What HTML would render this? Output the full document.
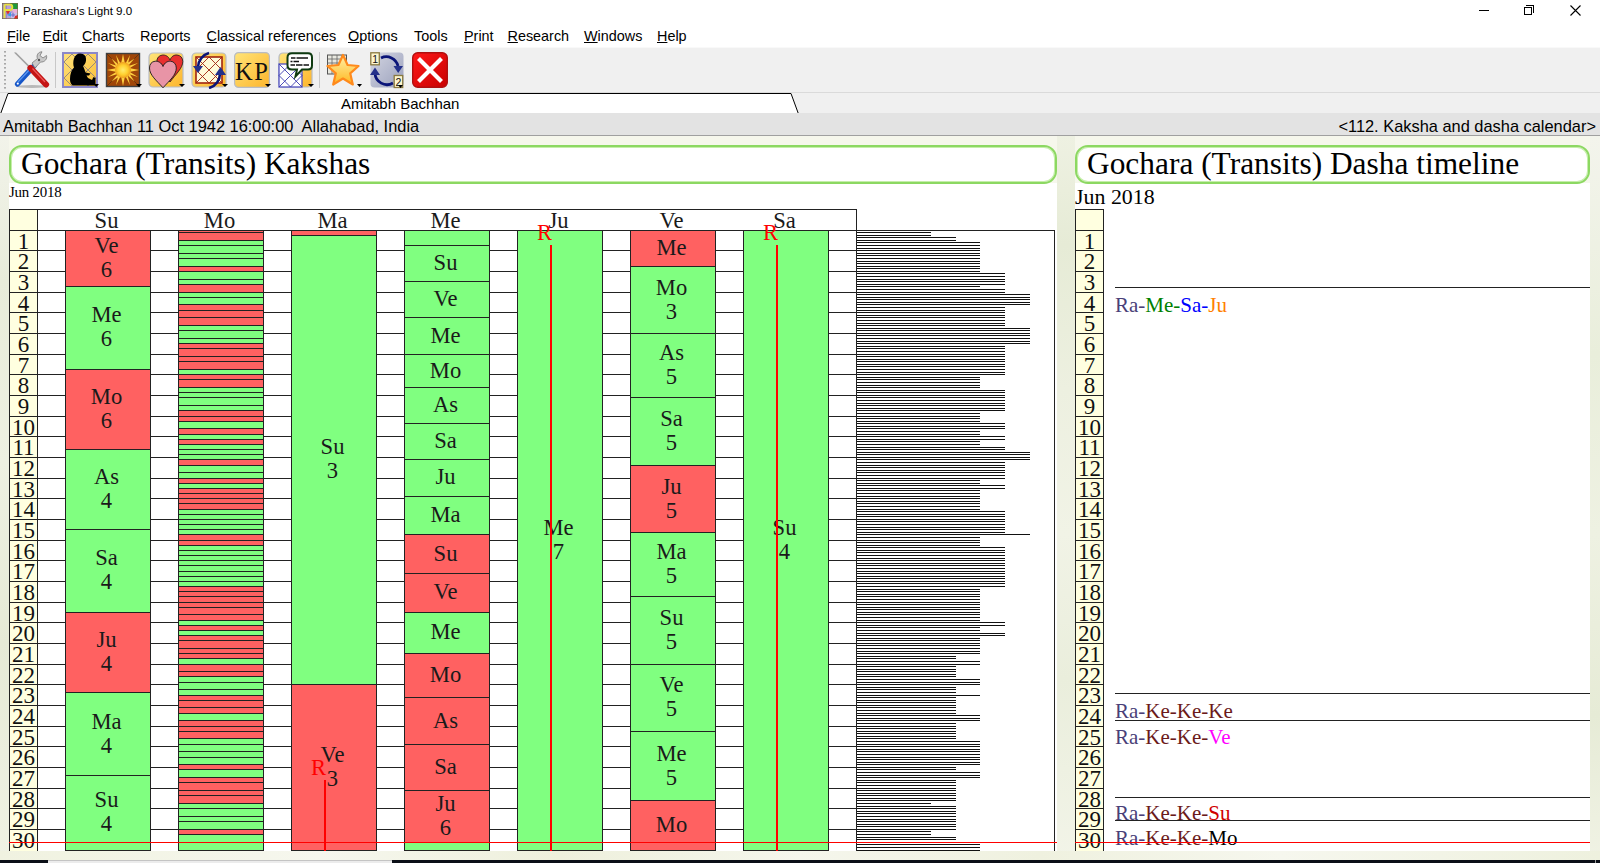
<!DOCTYPE html><html><head><meta charset="utf-8"><title>Parashara's Light 9.0</title><style>
*{margin:0;padding:0;box-sizing:border-box}
html,body{width:1600px;height:863px;overflow:hidden;background:#fff}
body{position:relative;font-family:"Liberation Sans",sans-serif;color:#000}
.a{position:absolute}
.ser{font-family:"Liberation Serif",serif}
.titlebar{left:0;top:0;width:1600px;height:24px;background:#fff}
.menubar{left:0;top:24px;width:1600px;height:23px;background:#fff}
.menubar span{position:absolute;top:4px;font-size:14.4px;line-height:17px;white-space:nowrap}
.menubar u{text-decoration:underline;text-underline-offset:0.6px;text-decoration-thickness:1px}
.toolbar{left:0;top:47px;width:1600px;height:46px;background:#f0f0f0;border-top:1px solid #e6e6e6}
.tabstrip{left:0;top:93px;width:1600px;height:21px;background:#f0f0f0;border-top:1px solid #a0a0a0}
.info{left:0;top:113px;width:1600px;height:23px;background:#e3e3e3;border-bottom:1px solid #a0a0a0}
.bg{left:0;top:136px;width:1600px;height:724px;background:radial-gradient(ellipse 14px 90px at 1066px 130px,#e2e7d4,rgba(226,231,212,0) 100%),radial-gradient(ellipse 12px 60px at 1063px 560px,#e8ecdc,rgba(232,236,220,0) 100%),radial-gradient(ellipse 8px 120px at 4px 400px,#e6ebd8,rgba(230,235,216,0) 100%),radial-gradient(ellipse 8px 150px at 1596px 560px,#e8edd8,rgba(232,237,216,0) 100%),#f6f7ec}
.panel{background:#fff}
.tbox{background:#fff;border:2px solid #8cd862;border-radius:13px;box-shadow:inset 0 0 0 1px #c6eeaa}
.hl{position:absolute;height:1px;background:#222}
.vl{position:absolute;width:1px;background:#222}
.bar{position:absolute;border:1px solid #222}
.lbl{position:absolute;font-family:"Liberation Serif",serif;font-size:22.6px;line-height:24px;text-align:center;color:#1a1a1a}
.num{position:absolute;font-family:"Liberation Serif",serif;font-size:23px;line-height:21px;text-align:center;color:#111}
.hist{position:absolute;height:1px;background:#111;left:857px}
.taskbar{left:0;top:860px;width:1600px;height:3px;background:#0b0f17}
</style></head><body>
<div class="a titlebar"></div>
<svg class="a" style="left:2px;top:3px" width="16" height="16" viewBox="0 0 16 16"><rect width="16" height="16" fill="#b8a0d8"/><rect x="0" y="0" width="5" height="16" fill="#9a88c8"/><path d="M8 0 L16 0 L16 6 L10 6 Z" fill="#1e9a3a"/><path d="M9 6 L16 6 L16 10 L12 10 Z" fill="#e8b0d8"/><path d="M4 8 L9 6 L6 12 Z" fill="#d83030"/><path d="M5 12 L9 9 L10 14 Z" fill="#38a0e8"/><path d="M9 10 L16 10 L16 16 L9 16 Z" fill="#c8c0e8"/><path d="M13 13 L16 12 L16 16 L12 16 Z" fill="#e02828"/><circle cx="11" cy="12" r="1.2" fill="none" stroke="#5050c0" stroke-width="0.8"/><path d="M2.5 1.5 L2.5 15 M2.5 1.5 L8 1.5 C11 1.5 11 7 8 7 L2.5 7" stroke="#e8e040" stroke-width="2" fill="none"/><rect x="0.3" y="0.3" width="15.4" height="15.4" fill="none" stroke="#7a6a40" stroke-width="0.6"/></svg>
<div class="a" style="left:23px;top:3px;font-size:11.6px;line-height:15px;color:#000">Parashara's Light 9.0</div>
<div class="a" style="left:1479px;top:10px;width:10px;height:1px;background:#000"></div>
<div class="a" style="left:1524px;top:7px;width:8px;height:8px;border:1px solid #000;background:#fff"></div>
<div class="a" style="left:1526px;top:5px;width:8px;height:8px;border-top:1px solid #000;border-right:1px solid #000"></div>
<div class="a" style="left:1524px;top:7px;width:8px;height:8px;border:1px solid #000;background:#fff"></div>
<svg class="a" style="left:1569.5px;top:4.5px" width="11" height="11"><path d="M0.5 0.5 L10.5 10.5 M10.5 0.5 L0.5 10.5" stroke="#000" stroke-width="1.1"/></svg>
<div class="a menubar">
<span style="left:7px"><u>F</u>ile</span>
<span style="left:42.5px"><u>E</u>dit</span>
<span style="left:82px"><u>C</u>harts</span>
<span style="left:140px">Reports</span>
<span style="left:206.5px"><u>C</u>lassical references</span>
<span style="left:348px"><u>O</u>ptions</span>
<span style="left:414px">Tools</span>
<span style="left:464px"><u>P</u>rint</span>
<span style="left:507.5px"><u>R</u>esearch</span>
<span style="left:584px"><u>W</u>indows</span>
<span style="left:657px"><u>H</u>elp</span>
</div>
<div class="a toolbar"></div>
<div class="a" style="left:0;top:47px;width:1600px;height:1px;background:#f9f9f9"></div>
<div class="a" style="left:0;top:92px;width:1600px;height:1px;background:#dadada"></div>
<svg class="a" style="left:3px;top:50px" width="4" height="40"><g fill="#a8a8a8"><rect x="1" y="1" width="2" height="1.6"/><rect x="1" y="5" width="2" height="1.6"/><rect x="1" y="9" width="2" height="1.6"/><rect x="1" y="13" width="2" height="1.6"/><rect x="1" y="17" width="2" height="1.6"/><rect x="1" y="21" width="2" height="1.6"/><rect x="1" y="25" width="2" height="1.6"/><rect x="1" y="29" width="2" height="1.6"/><rect x="1" y="33" width="2" height="1.6"/><rect x="1" y="37" width="2" height="1.6"/></g></svg>
<!-- tools -->
<svg class="a" style="left:13px;top:51px" width="37" height="38" viewBox="0 0 37 38">
 <ellipse cx="19" cy="35.5" rx="16" ry="1.5" fill="#8a8a8a" opacity="0.55"/>
 <line x1="2" y1="1.5" x2="17" y2="16.5" stroke="#d8d8d8" stroke-width="2.4"/>
 <line x1="2" y1="1.5" x2="17" y2="16.5" stroke="#6a6a6a" stroke-width="0.9"/>
 <line x1="4.5" y1="33" x2="21" y2="15" stroke="#1656c8" stroke-width="5.2" stroke-linecap="round"/>
 <line x1="5" y1="31" x2="19" y2="16" stroke="#5a96ee" stroke-width="1.3"/>
 <circle cx="4.8" cy="32.6" r="1.1" fill="#fff"/>
 <path d="M19 12 L24.5 7.5 C23 4 25.5 0.8 29 0.8 L27 4.5 L30 7 L33.5 4.5 C34.5 8 31.5 11.5 27.5 11 L22 17 Z" fill="#c9c9c9" stroke="#7a7a7a" stroke-width="0.8"/>
 <circle cx="26" cy="9" r="1.2" fill="#555"/>
 <line x1="17.5" y1="17" x2="33" y2="33.5" stroke="#c41414" stroke-width="6.2" stroke-linecap="round"/>
 <line x1="19.5" y1="17.5" x2="32" y2="31" stroke="#ee5a5a" stroke-width="1.2"/>
</svg>
<div class="a" style="left:55px;top:52px;width:1px;height:36px;background:#c8c8c8"></div>
<!-- baby -->
<svg class="a" style="left:62px;top:52px" width="38" height="37" viewBox="0 0 38 37">
 <defs><linearGradient id="yg" x1="0" y1="0" x2="1" y2="1"><stop offset="0" stop-color="#ffe27a"/><stop offset="1" stop-color="#fbbf3a"/></linearGradient></defs>
 <rect x="1" y="1" width="34" height="34" fill="url(#yg)" stroke="#8c88c8" stroke-width="2"/>
 <g stroke="#9a8a7a" stroke-width="1" fill="none"><path d="M2 10 L10 2 M2 26 L26 2 M10 34 L34 10 M26 34 L34 26 M2 10 L26 34 M2 26 L10 34 M10 2 L34 26 M26 2 L34 10"/></g>
 <path d="M18 1.5 C22.5 1.5 24.5 4.5 24 8.5 C23.8 11 22.5 13 21 14 C22 16 23 18.5 23.5 20.5 L28.5 21.5 L27 23.5 L24.5 23.5 L26 26 L30 28 L31.5 25 L33.5 26 L33.5 33.5 L12 33.5 C9.5 33.5 8 31 8 27 C8 22 9.5 18 12 15.5 C11 13.5 11 9 12 6.5 C13 3.5 15 1.5 18 1.5 Z" fill="#000"/>
 <path d="M31.5 32 L37 32 L34.2 35 Z" fill="#000"/>
</svg>
<!-- sun -->
<svg class="a" style="left:105px;top:52px" width="38" height="37" viewBox="0 0 38 37">
 <defs><radialGradient id="sg"><stop offset="0" stop-color="#ffec70"/><stop offset="0.6" stop-color="#ffd030"/><stop offset="1" stop-color="#f0a020"/></radialGradient></defs>
 <rect x="1.5" y="1.5" width="33" height="33" fill="#a04608" stroke="#404040" stroke-width="1.4"/>
 <path d="M2 2 L34 34 M34 2 L2 34" stroke="#5a3010" stroke-width="0.8"/>
 <g fill="#ffd040"><path d="M18 2 L20 12 L16 12 Z M18 34 L20 24 L16 24 Z M2 18 L12 16 L12 20 Z M34 18 L24 16 L24 20 Z M6.5 6.5 L14 13 L12 15 Z M29.5 29.5 L22 23 L24 21 Z M29.5 6.5 L23 14 L21 12 Z M6.5 29.5 L13 22 L15 24 Z M11 3 L16 12.5 L13.5 13.5 Z M25 3 L22.5 13.5 L20 12.5 Z M25 33 L20 23.5 L22.5 22.5 Z M11 33 L13.5 22.5 L16 23.5 Z M3 11 L12.5 14 L12 16.5 Z M33 11 L24 16.5 L23.5 14 Z M33 25 L23.5 22 L24 19.5 Z M3 25 L12 19.5 L12.5 22 Z"/></g>
 <circle cx="18" cy="18" r="8" fill="url(#sg)"/>
 <path d="M31 32 L37 32 L34 35 Z" fill="#000"/>
</svg>
<!-- hearts -->
<svg class="a" style="left:148px;top:52px" width="38" height="37" viewBox="0 0 38 37">
 <defs><linearGradient id="yg2" x1="0" y1="0" x2="1" y2="1"><stop offset="0" stop-color="#ffe478"/><stop offset="1" stop-color="#fdb52c"/></linearGradient></defs>
 <rect x="1" y="1" width="34" height="34" rx="4" fill="url(#yg2)" stroke="#b8bcc4" stroke-width="1.2"/>
 <path d="M22 8 C20.5 4 17 2.8 14.5 3 C11 3.3 8.8 6 8.8 9.5 C8.8 16 16 22 22 30 C28 22 34.8 16 34.8 9.5 C34.8 6 32.5 3.3 29 3 C26.5 2.8 23.5 4 22 8 Z" fill="#e8302f" stroke="#1a1a1a" stroke-width="0.8"/>
 <path d="M15 14.5 C13.5 10.5 10 9 7.2 9.2 C3.6 9.5 1.5 12.3 1.5 16 C1.5 23 8.5 28.5 15 35.8 C21.5 28.5 28.3 23 28.3 16 C28.3 12.3 26 9.5 22.6 9.2 C19.8 9 16.5 10.5 15 14.5 Z" fill="#e894a6" stroke="#1a1a1a" stroke-width="0.9"/>
 <path d="M31 32 L37 32 L34 35 Z" fill="#000"/>
</svg>
<!-- rotate chart -->
<svg class="a" style="left:191px;top:51px" width="38" height="38" viewBox="0 0 38 38">
 <rect x="1" y="2" width="34" height="34" rx="4" fill="url(#yg2)" stroke="#b8bcc4" stroke-width="1.2"/>
 <rect x="5" y="6" width="26" height="26" fill="#fffbd8" stroke="#a02410" stroke-width="1.6"/>
 <g stroke="#a02410" stroke-width="0.9" fill="none"><path d="M5 19 L18 6 L31 19 L18 32 Z M5 6 L31 32 M31 6 L5 32"/></g>
 <path d="M18 2 A15 15 0 0 0 7 16" stroke="#0a1478" stroke-width="2.6" fill="none"/>
 <path d="M2 15 L12 15 L7 22 Z" fill="#23308a"/>
 <path d="M18 37 A15 15 0 0 0 29 22" stroke="#0a1478" stroke-width="2.6" fill="none"/>
 <path d="M24 24 L35 24 L29.5 16 Z" fill="#23308a"/>
 <path d="M31 33 L37 33 L34 36 Z" fill="#000"/>
</svg>
<!-- KP -->
<svg class="a" style="left:234px;top:52px" width="38" height="37" viewBox="0 0 38 37">
 <rect x="0.6" y="0.6" width="34.8" height="34.8" rx="4" fill="url(#yg2)" stroke="#b8bcc4" stroke-width="1.2"/>
 <text x="1" y="27.5" font-family="Liberation Serif" font-size="24.5" fill="#111" letter-spacing="1.6">KP</text>
 <path d="M31 32 L37 32 L34 35 Z" fill="#000"/>
</svg>
<!-- chat chart -->
<svg class="a" style="left:278px;top:52px" width="38" height="37" viewBox="0 0 38 37">
 <rect x="1" y="1" width="33" height="34" rx="4" fill="url(#yg2)" stroke="#b8bcc4" stroke-width="1.2"/>
 <rect x="1" y="12" width="23" height="23" fill="#fff" stroke="#5050c0" stroke-width="1.3"/>
 <g stroke="#3a3ab0" stroke-width="0.9" fill="none"><path d="M1 12 L24 35 M24 12 L1 35 M1 23.5 L12.5 12 L24 23.5 L12.5 35 Z"/></g>
 <path d="M9.5 5.5 C9.5 2.5 11.5 1.2 14 1.2 L30 1.2 C32.5 1.2 34 2.5 34 5.5 L34 13.5 C34 16 32.5 17.5 30 17.5 L24 17.5 L17.5 24.5 L19 17.5 L14 17.5 C11.5 17.5 9.5 16 9.5 13.5 Z" fill="#fff" stroke="#0e3a10" stroke-width="2"/>
 <g stroke="#111" stroke-width="1.6"><path d="M13 6 L17.5 6 M18.5 6 L30 6 M12.5 9.5 L14.5 9.5 M15.5 9.5 L21 9.5 M12.5 13 L17 13 M18 13 L24.5 13 M25.5 13 L31 13"/></g>
 <path d="M30 32 L36 32 L33 35 Z" fill="#000"/>
</svg>
<div class="a" style="left:319px;top:52px;width:1px;height:36px;background:#c8c8c8"></div>
<!-- star -->
<svg class="a" style="left:326px;top:53px" width="38" height="36" viewBox="0 0 38 36">
 <defs><linearGradient id="stg" x1="0" y1="0" x2="0" y2="1"><stop offset="0" stop-color="#fff0a8"/><stop offset="1" stop-color="#ffb820"/></linearGradient></defs>
 <rect x="1.5" y="2" width="19" height="19" fill="#e8e8e0" stroke="#555" stroke-width="1"/>
 <g stroke="#666" stroke-width="0.8"><path d="M1.5 6 L20.5 6 M1.5 10 L20.5 10 M1.5 14 L20.5 14 M6 2 L6 21 M11 2 L11 21 M16 2 L16 21"/></g>
 <path d="M17 2 L21.6 12 L32.5 13 L24.2 20.3 L26.8 31.5 L17 25.5 L7.2 31.5 L9.8 20.3 L1.5 13 L12.4 12 Z" fill="url(#stg)" stroke="#ff8a1c" stroke-width="2.2" stroke-linejoin="round"/>
 <path d="M31 31 L36 31 L33.5 34 Z" fill="#000"/>
</svg>
<!-- sync -->
<svg class="a" style="left:370px;top:52px" width="38" height="37" viewBox="0 0 38 37">
 <defs><linearGradient id="syg" x1="0" y1="0" x2="1" y2="1"><stop offset="0" stop-color="#d4d6e2"/><stop offset="1" stop-color="#9aa0bc"/></linearGradient></defs>
 <rect x="0.5" y="0.5" width="33" height="35" rx="4" fill="url(#syg)"/>
 <path d="M11 6 A12 12 0 0 1 28 14" stroke="#0a1478" stroke-width="2.8" fill="none"/>
 <path d="M23.5 14 L33 14 L28.2 21 Z" fill="#23308a"/>
 <path d="M23 31 A12 12 0 0 1 5 21" stroke="#0a1478" stroke-width="2.8" fill="none"/>
 <path d="M0 23 L10 23 L5 15.5 Z" fill="#23308a"/>
 <rect x="0.8" y="0.8" width="8.5" height="12" fill="#fdf6d0" stroke="#8a7a40" stroke-width="1.3"/>
 <text x="2.3" y="11" font-family="Liberation Sans" font-size="10.5" fill="#111">1</text>
 <rect x="24.2" y="23.5" width="8.5" height="12" fill="#fdf6d0" stroke="#8a7a40" stroke-width="1.3"/>
 <text x="25.5" y="34" font-family="Liberation Sans" font-size="10.5" fill="#111">2</text>
 <path d="M28 33 L33 33 L30.5 36 Z" fill="#000"/>
</svg>
<!-- close -->
<svg class="a" style="left:412px;top:52px" width="36" height="36" viewBox="0 0 36 36">
 <defs><linearGradient id="rg" x1="0" y1="0" x2="1" y2="1"><stop offset="0" stop-color="#ff1a1a"/><stop offset="1" stop-color="#c80000"/></linearGradient></defs>
 <rect x="0.7" y="0.7" width="34.6" height="34.6" rx="5" fill="url(#rg)" stroke="#b01010" stroke-width="1.4"/>
 <path d="M6.5 6.5 L29.5 29.5 M29.5 6.5 L6.5 29.5" stroke="#fff" stroke-width="4.2"/>
</svg>

<div class="a" style="left:0;top:93px;width:1600px;height:21px;background:#f0f0f0"></div>
<svg class="a" style="left:0;top:92px" width="800" height="23"><path d="M0.5 22 L8 1.5 L791 1.5 L798.5 22" fill="#fff" stroke="#000" stroke-width="1"/></svg>
<div class="a" style="left:341px;top:95.5px;font-size:15px;line-height:16px">Amitabh Bachhan</div>
<div class="a info"></div>
<div class="a" style="left:3px;top:117px;font-size:16.4px;line-height:19px;white-space:pre">Amitabh Bachhan 11 Oct 1942 16:00:00  Allahabad, India</div>
<div class="a" style="right:4px;top:117px;font-size:16.4px;line-height:19px;white-space:pre">&lt;112. Kaksha and dasha calendar&gt;</div>
<div class="a bg"></div>
<div class="a" style="left:1057px;top:136px;width:18px;height:724px;background:linear-gradient(to bottom,#eef1e2 0%,#e6ebd6 15%,#edf0e0 35%,#f1f3e6 55%,#eaeedc 75%,#f2f4e8 100%)"></div>
<div class="a" style="left:0;top:136px;width:9px;height:724px;background:linear-gradient(to bottom,#f2f3ea 0%,#e8ecda 20%,#eef1e2 45%,#e6ead6 70%,#f0f2e4 100%)"></div>
<div class="a" style="left:1590px;top:136px;width:10px;height:724px;background:linear-gradient(to bottom,#f3f4ec 0%,#e9eedb 30%,#eef1e2 55%,#e6ebd6 80%,#f0f2e4 100%)"></div>
<div class="a" style="left:0;top:851px;width:1600px;height:9px;background:linear-gradient(to right,#f0f2e0 0%,#f6f7ee 20%,#eef0dc 35%,#f5f6ec 50%,#eff1df 65%,#f6f7ee 80%,#eef1de 100%)"></div>
<div class="a panel" style="left:9px;top:183px;width:1048px;height:668px"></div>
<div class="a tbox" style="left:9px;top:145px;width:1048px;height:39px"></div>
<div class="a ser" style="left:21px;top:147px;font-size:31.4px;line-height:34px">Gochara (Transits) Kakshas</div>
<div class="a ser" style="left:9px;top:184.4px;font-size:14.9px;line-height:16px;letter-spacing:-0.2px">Jun 2018</div>
<div class="a" style="left:9px;top:209px;width:29px;height:642px;background:#ffffe0"></div>
<div class="hl" style="left:9px;top:209px;width:848px"></div>
<div class="vl" style="left:9px;top:209px;height:642px"></div>
<div class="vl" style="left:37px;top:209px;height:642px"></div>
<div class="vl" style="left:856px;top:209px;height:22px"></div>
<div class="hl" style="left:9px;top:230px;width:848px"></div>
<div class="hl" style="left:9px;top:250px;width:848px"></div>
<div class="hl" style="left:9px;top:271px;width:848px"></div>
<div class="hl" style="left:9px;top:292px;width:848px"></div>
<div class="hl" style="left:9px;top:312px;width:848px"></div>
<div class="hl" style="left:9px;top:333px;width:848px"></div>
<div class="hl" style="left:9px;top:354px;width:848px"></div>
<div class="hl" style="left:9px;top:374px;width:848px"></div>
<div class="hl" style="left:9px;top:395px;width:848px"></div>
<div class="hl" style="left:9px;top:416px;width:848px"></div>
<div class="hl" style="left:9px;top:436px;width:848px"></div>
<div class="hl" style="left:9px;top:457px;width:848px"></div>
<div class="hl" style="left:9px;top:478px;width:848px"></div>
<div class="hl" style="left:9px;top:498px;width:848px"></div>
<div class="hl" style="left:9px;top:519px;width:848px"></div>
<div class="hl" style="left:9px;top:540px;width:848px"></div>
<div class="hl" style="left:9px;top:560px;width:848px"></div>
<div class="hl" style="left:9px;top:581px;width:848px"></div>
<div class="hl" style="left:9px;top:602px;width:848px"></div>
<div class="hl" style="left:9px;top:622px;width:848px"></div>
<div class="hl" style="left:9px;top:643px;width:848px"></div>
<div class="hl" style="left:9px;top:664px;width:848px"></div>
<div class="hl" style="left:9px;top:684px;width:848px"></div>
<div class="hl" style="left:9px;top:705px;width:848px"></div>
<div class="hl" style="left:9px;top:726px;width:848px"></div>
<div class="hl" style="left:9px;top:746px;width:848px"></div>
<div class="hl" style="left:9px;top:767px;width:848px"></div>
<div class="hl" style="left:9px;top:788px;width:848px"></div>
<div class="hl" style="left:9px;top:808px;width:848px"></div>
<div class="hl" style="left:9px;top:829px;width:848px"></div>
<div class="a" style="left:856px;top:230px;width:199px;height:621px;border:1px solid #222;border-bottom:none;background:#fff"></div>
<div class="num" style="left:10px;top:231px;width:27px">1</div>
<div class="num" style="left:10px;top:251px;width:27px">2</div>
<div class="num" style="left:10px;top:272px;width:27px">3</div>
<div class="num" style="left:10px;top:293px;width:27px">4</div>
<div class="num" style="left:10px;top:313px;width:27px">5</div>
<div class="num" style="left:10px;top:334px;width:27px">6</div>
<div class="num" style="left:10px;top:355px;width:27px">7</div>
<div class="num" style="left:10px;top:375px;width:27px">8</div>
<div class="num" style="left:10px;top:396px;width:27px">9</div>
<div class="num" style="left:10px;top:417px;width:27px">10</div>
<div class="num" style="left:10px;top:437px;width:27px">11</div>
<div class="num" style="left:10px;top:458px;width:27px">12</div>
<div class="num" style="left:10px;top:479px;width:27px">13</div>
<div class="num" style="left:10px;top:499px;width:27px">14</div>
<div class="num" style="left:10px;top:520px;width:27px">15</div>
<div class="num" style="left:10px;top:541px;width:27px">16</div>
<div class="num" style="left:10px;top:561px;width:27px">17</div>
<div class="num" style="left:10px;top:582px;width:27px">18</div>
<div class="num" style="left:10px;top:603px;width:27px">19</div>
<div class="num" style="left:10px;top:623px;width:27px">20</div>
<div class="num" style="left:10px;top:644px;width:27px">21</div>
<div class="num" style="left:10px;top:665px;width:27px">22</div>
<div class="num" style="left:10px;top:685px;width:27px">23</div>
<div class="num" style="left:10px;top:706px;width:27px">24</div>
<div class="num" style="left:10px;top:727px;width:27px">25</div>
<div class="num" style="left:10px;top:747px;width:27px">26</div>
<div class="num" style="left:10px;top:768px;width:27px">27</div>
<div class="num" style="left:10px;top:789px;width:27px">28</div>
<div class="num" style="left:10px;top:809px;width:27px">29</div>
<div class="num" style="left:10px;top:830px;width:27px">30</div>
<div class="lbl" style="left:66.5px;top:208.6px;width:80px;line-height:24px">Su</div>
<div class="lbl" style="left:179.5px;top:208.6px;width:80px;line-height:24px">Mo</div>
<div class="lbl" style="left:292.5px;top:208.6px;width:80px;line-height:24px">Ma</div>
<div class="lbl" style="left:405.5px;top:208.6px;width:80px;line-height:24px">Me</div>
<div class="lbl" style="left:518.5px;top:208.6px;width:80px;line-height:24px">Ju</div>
<div class="lbl" style="left:631.5px;top:208.6px;width:80px;line-height:24px">Ve</div>
<div class="lbl" style="left:744.5px;top:208.6px;width:80px;line-height:24px">Sa</div>
<div class="bar" style="left:65px;top:230px;width:86px;height:57px;background:#ff6161"></div>
<div class="bar" style="left:65px;top:286px;width:86px;height:84px;background:#80ff80"></div>
<div class="bar" style="left:65px;top:369px;width:86px;height:81px;background:#ff6161"></div>
<div class="bar" style="left:65px;top:449px;width:86px;height:81px;background:#80ff80"></div>
<div class="bar" style="left:65px;top:529px;width:86px;height:84px;background:#80ff80"></div>
<div class="bar" style="left:65px;top:612px;width:86px;height:81px;background:#ff6161"></div>
<div class="bar" style="left:65px;top:692px;width:86px;height:84px;background:#80ff80"></div>
<div class="bar" style="left:65px;top:775px;width:86px;height:76px;background:#80ff80"></div>
<div class="lbl" style="left:63.5px;top:234.1px;width:86px">Ve<br>6</div>
<div class="lbl" style="left:63.5px;top:303.2px;width:86px">Me<br>6</div>
<div class="lbl" style="left:63.5px;top:384.8px;width:86px">Mo<br>6</div>
<div class="lbl" style="left:63.5px;top:464.8px;width:86px">As<br>4</div>
<div class="lbl" style="left:63.5px;top:546.2px;width:86px">Sa<br>4</div>
<div class="lbl" style="left:63.5px;top:627.8px;width:86px">Ju<br>4</div>
<div class="lbl" style="left:63.5px;top:709.5px;width:86px">Ma<br>4</div>
<div class="lbl" style="left:63.5px;top:788.4px;width:86px">Su<br>4</div>
<div class="bar" style="left:178px;top:230px;width:86px;height:3px;background:#ff6161"></div>
<div class="bar" style="left:178px;top:232px;width:86px;height:9px;background:#ff6161"></div>
<div class="bar" style="left:178px;top:240px;width:86px;height:6px;background:#80ff80"></div>
<div class="bar" style="left:178px;top:245px;width:86px;height:9px;background:#80ff80"></div>
<div class="bar" style="left:178px;top:253px;width:86px;height:6px;background:#80ff80"></div>
<div class="bar" style="left:178px;top:258px;width:86px;height:9px;background:#80ff80"></div>
<div class="bar" style="left:178px;top:266px;width:86px;height:6px;background:#ff6161"></div>
<div class="bar" style="left:178px;top:271px;width:86px;height:9px;background:#80ff80"></div>
<div class="bar" style="left:178px;top:279px;width:86px;height:6px;background:#80ff80"></div>
<div class="bar" style="left:178px;top:284px;width:86px;height:9px;background:#ff6161"></div>
<div class="bar" style="left:178px;top:292px;width:86px;height:6px;background:#80ff80"></div>
<div class="bar" style="left:178px;top:297px;width:86px;height:8px;background:#80ff80"></div>
<div class="bar" style="left:178px;top:304px;width:86px;height:7px;background:#ff6161"></div>
<div class="bar" style="left:178px;top:310px;width:86px;height:8px;background:#ff6161"></div>
<div class="bar" style="left:178px;top:317px;width:86px;height:9px;background:#ff6161"></div>
<div class="bar" style="left:178px;top:325px;width:86px;height:6px;background:#80ff80"></div>
<div class="bar" style="left:178px;top:330px;width:86px;height:9px;background:#80ff80"></div>
<div class="bar" style="left:178px;top:338px;width:86px;height:6px;background:#80ff80"></div>
<div class="bar" style="left:178px;top:343px;width:86px;height:6px;background:#ff6161"></div>
<div class="bar" style="left:178px;top:348px;width:86px;height:9px;background:#ff6161"></div>
<div class="bar" style="left:178px;top:356px;width:86px;height:6px;background:#ff6161"></div>
<div class="bar" style="left:178px;top:361px;width:86px;height:9px;background:#ff6161"></div>
<div class="bar" style="left:178px;top:369px;width:86px;height:6px;background:#80ff80"></div>
<div class="bar" style="left:178px;top:374px;width:86px;height:6px;background:#ff6161"></div>
<div class="bar" style="left:178px;top:379px;width:86px;height:9px;background:#ff6161"></div>
<div class="bar" style="left:178px;top:387px;width:86px;height:6px;background:#80ff80"></div>
<div class="bar" style="left:178px;top:392px;width:86px;height:6px;background:#80ff80"></div>
<div class="bar" style="left:178px;top:397px;width:86px;height:9px;background:#80ff80"></div>
<div class="bar" style="left:178px;top:405px;width:86px;height:6px;background:#80ff80"></div>
<div class="bar" style="left:178px;top:410px;width:86px;height:7px;background:#ff6161"></div>
<div class="bar" style="left:178px;top:416px;width:86px;height:6px;background:#ff6161"></div>
<div class="bar" style="left:178px;top:421px;width:86px;height:8px;background:#80ff80"></div>
<div class="bar" style="left:178px;top:428px;width:86px;height:7px;background:#ff6161"></div>
<div class="bar" style="left:178px;top:434px;width:86px;height:6px;background:#80ff80"></div>
<div class="bar" style="left:178px;top:439px;width:86px;height:6px;background:#ff6161"></div>
<div class="bar" style="left:178px;top:444px;width:86px;height:6px;background:#80ff80"></div>
<div class="bar" style="left:178px;top:449px;width:86px;height:6px;background:#80ff80"></div>
<div class="bar" style="left:178px;top:454px;width:86px;height:6px;background:#80ff80"></div>
<div class="bar" style="left:178px;top:459px;width:86px;height:7px;background:#ff6161"></div>
<div class="bar" style="left:178px;top:465px;width:86px;height:8px;background:#80ff80"></div>
<div class="bar" style="left:178px;top:472px;width:86px;height:7px;background:#80ff80"></div>
<div class="bar" style="left:178px;top:478px;width:86px;height:6px;background:#ff6161"></div>
<div class="bar" style="left:178px;top:483px;width:86px;height:6px;background:#80ff80"></div>
<div class="bar" style="left:178px;top:488px;width:86px;height:6px;background:#ff6161"></div>
<div class="bar" style="left:178px;top:493px;width:86px;height:6px;background:#ff6161"></div>
<div class="bar" style="left:178px;top:498px;width:86px;height:6px;background:#ff6161"></div>
<div class="bar" style="left:178px;top:503px;width:86px;height:7px;background:#ff6161"></div>
<div class="bar" style="left:178px;top:509px;width:86px;height:6px;background:#80ff80"></div>
<div class="bar" style="left:178px;top:514px;width:86px;height:6px;background:#80ff80"></div>
<div class="bar" style="left:178px;top:519px;width:86px;height:6px;background:#80ff80"></div>
<div class="bar" style="left:178px;top:524px;width:86px;height:6px;background:#80ff80"></div>
<div class="bar" style="left:178px;top:529px;width:86px;height:6px;background:#80ff80"></div>
<div class="bar" style="left:178px;top:534px;width:86px;height:7px;background:#ff6161"></div>
<div class="bar" style="left:178px;top:540px;width:86px;height:6px;background:#ff6161"></div>
<div class="bar" style="left:178px;top:545px;width:86px;height:6px;background:#80ff80"></div>
<div class="bar" style="left:178px;top:550px;width:86px;height:6px;background:#80ff80"></div>
<div class="bar" style="left:178px;top:555px;width:86px;height:6px;background:#80ff80"></div>
<div class="bar" style="left:178px;top:560px;width:86px;height:6px;background:#80ff80"></div>
<div class="bar" style="left:178px;top:565px;width:86px;height:7px;background:#80ff80"></div>
<div class="bar" style="left:178px;top:571px;width:86px;height:6px;background:#80ff80"></div>
<div class="bar" style="left:178px;top:576px;width:86px;height:6px;background:#80ff80"></div>
<div class="bar" style="left:178px;top:581px;width:86px;height:6px;background:#80ff80"></div>
<div class="bar" style="left:178px;top:586px;width:86px;height:6px;background:#ff6161"></div>
<div class="bar" style="left:178px;top:591px;width:86px;height:6px;background:#ff6161"></div>
<div class="bar" style="left:178px;top:596px;width:86px;height:7px;background:#ff6161"></div>
<div class="bar" style="left:178px;top:602px;width:86px;height:6px;background:#ff6161"></div>
<div class="bar" style="left:178px;top:607px;width:86px;height:8px;background:#ff6161"></div>
<div class="bar" style="left:178px;top:614px;width:86px;height:7px;background:#ff6161"></div>
<div class="bar" style="left:178px;top:620px;width:86px;height:6px;background:#80ff80"></div>
<div class="bar" style="left:178px;top:625px;width:86px;height:6px;background:#ff6161"></div>
<div class="bar" style="left:178px;top:630px;width:86px;height:6px;background:#80ff80"></div>
<div class="bar" style="left:178px;top:635px;width:86px;height:6px;background:#ff6161"></div>
<div class="bar" style="left:178px;top:640px;width:86px;height:9px;background:#ff6161"></div>
<div class="bar" style="left:178px;top:648px;width:86px;height:6px;background:#ff6161"></div>
<div class="bar" style="left:178px;top:653px;width:86px;height:6px;background:#ff6161"></div>
<div class="bar" style="left:178px;top:658px;width:86px;height:7px;background:#80ff80"></div>
<div class="bar" style="left:178px;top:664px;width:86px;height:8px;background:#ff6161"></div>
<div class="bar" style="left:178px;top:671px;width:86px;height:6px;background:#ff6161"></div>
<div class="bar" style="left:178px;top:676px;width:86px;height:7px;background:#80ff80"></div>
<div class="bar" style="left:178px;top:682px;width:86px;height:8px;background:#80ff80"></div>
<div class="bar" style="left:178px;top:689px;width:86px;height:7px;background:#80ff80"></div>
<div class="bar" style="left:178px;top:695px;width:86px;height:6px;background:#ff6161"></div>
<div class="bar" style="left:178px;top:700px;width:86px;height:8px;background:#ff6161"></div>
<div class="bar" style="left:178px;top:707px;width:86px;height:7px;background:#ff6161"></div>
<div class="bar" style="left:178px;top:713px;width:86px;height:8px;background:#80ff80"></div>
<div class="bar" style="left:178px;top:720px;width:86px;height:7px;background:#ff6161"></div>
<div class="bar" style="left:178px;top:726px;width:86px;height:6px;background:#ff6161"></div>
<div class="bar" style="left:178px;top:731px;width:86px;height:8px;background:#ff6161"></div>
<div class="bar" style="left:178px;top:738px;width:86px;height:7px;background:#80ff80"></div>
<div class="bar" style="left:178px;top:744px;width:86px;height:8px;background:#80ff80"></div>
<div class="bar" style="left:178px;top:751px;width:86px;height:7px;background:#80ff80"></div>
<div class="bar" style="left:178px;top:757px;width:86px;height:8px;background:#80ff80"></div>
<div class="bar" style="left:178px;top:764px;width:86px;height:6px;background:#ff6161"></div>
<div class="bar" style="left:178px;top:769px;width:86px;height:9px;background:#80ff80"></div>
<div class="bar" style="left:178px;top:777px;width:86px;height:6px;background:#ff6161"></div>
<div class="bar" style="left:178px;top:782px;width:86px;height:9px;background:#ff6161"></div>
<div class="bar" style="left:178px;top:790px;width:86px;height:6px;background:#ff6161"></div>
<div class="bar" style="left:178px;top:795px;width:86px;height:9px;background:#ff6161"></div>
<div class="bar" style="left:178px;top:803px;width:86px;height:6px;background:#80ff80"></div>
<div class="bar" style="left:178px;top:808px;width:86px;height:9px;background:#80ff80"></div>
<div class="bar" style="left:178px;top:816px;width:86px;height:6px;background:#80ff80"></div>
<div class="bar" style="left:178px;top:821px;width:86px;height:9px;background:#80ff80"></div>
<div class="bar" style="left:178px;top:829px;width:86px;height:6px;background:#ff6161"></div>
<div class="bar" style="left:178px;top:834px;width:86px;height:17px;background:#80ff80"></div>
<div class="bar" style="left:291px;top:230px;width:86px;height:6px;background:#ff6161"></div>
<div class="bar" style="left:291px;top:235px;width:86px;height:450px;background:#80ff80"></div>
<div class="bar" style="left:291px;top:684px;width:86px;height:167px;background:#ff6161"></div>
<div class="lbl" style="left:289.5px;top:435.4px;width:86px">Su<br>3</div>
<div class="lbl" style="left:289.5px;top:742.8px;width:86px">Ve<br>3</div>
<div class="bar" style="left:404px;top:230px;width:86px;height:16px;background:#80ff80"></div>
<div class="bar" style="left:404px;top:245px;width:86px;height:37px;background:#80ff80"></div>
<div class="bar" style="left:404px;top:281px;width:86px;height:37px;background:#80ff80"></div>
<div class="bar" style="left:404px;top:317px;width:86px;height:38px;background:#80ff80"></div>
<div class="bar" style="left:404px;top:354px;width:86px;height:34px;background:#80ff80"></div>
<div class="bar" style="left:404px;top:387px;width:86px;height:37px;background:#80ff80"></div>
<div class="bar" style="left:404px;top:423px;width:86px;height:37px;background:#80ff80"></div>
<div class="bar" style="left:404px;top:459px;width:86px;height:38px;background:#80ff80"></div>
<div class="bar" style="left:404px;top:496px;width:86px;height:39px;background:#80ff80"></div>
<div class="bar" style="left:404px;top:534px;width:86px;height:40px;background:#ff6161"></div>
<div class="bar" style="left:404px;top:573px;width:86px;height:40px;background:#ff6161"></div>
<div class="bar" style="left:404px;top:612px;width:86px;height:42px;background:#80ff80"></div>
<div class="bar" style="left:404px;top:653px;width:86px;height:45px;background:#ff6161"></div>
<div class="bar" style="left:404px;top:697px;width:86px;height:48px;background:#ff6161"></div>
<div class="bar" style="left:404px;top:744px;width:86px;height:47px;background:#ff6161"></div>
<div class="bar" style="left:404px;top:790px;width:86px;height:53px;background:#ff6161"></div>
<div class="bar" style="left:404px;top:842px;width:86px;height:9px;background:#80ff80"></div>
<div class="lbl" style="left:402.5px;top:250.9px;width:86px">Su</div>
<div class="lbl" style="left:402.5px;top:287.1px;width:86px">Ve</div>
<div class="lbl" style="left:402.5px;top:323.5px;width:86px">Me</div>
<div class="lbl" style="left:402.5px;top:358.5px;width:86px">Mo</div>
<div class="lbl" style="left:402.5px;top:393.0px;width:86px">As</div>
<div class="lbl" style="left:402.5px;top:428.9px;width:86px">Sa</div>
<div class="lbl" style="left:402.5px;top:465.2px;width:86px">Ju</div>
<div class="lbl" style="left:402.5px;top:502.8px;width:86px">Ma</div>
<div class="lbl" style="left:402.5px;top:541.5px;width:86px">Su</div>
<div class="lbl" style="left:402.5px;top:580.4px;width:86px">Ve</div>
<div class="lbl" style="left:402.5px;top:620.4px;width:86px">Me</div>
<div class="lbl" style="left:402.5px;top:662.9px;width:86px">Mo</div>
<div class="lbl" style="left:402.5px;top:708.5px;width:86px">As</div>
<div class="lbl" style="left:402.5px;top:754.9px;width:86px">Sa</div>
<div class="lbl" style="left:402.5px;top:791.8px;width:86px">Ju<br>6</div>
<div class="bar" style="left:517px;top:230px;width:86px;height:621px;background:#80ff80"></div>
<div class="lbl" style="left:515.5px;top:516.1px;width:86px">Me<br>7</div>
<div class="bar" style="left:630px;top:230px;width:86px;height:37px;background:#ff6161"></div>
<div class="bar" style="left:630px;top:266px;width:86px;height:68px;background:#80ff80"></div>
<div class="bar" style="left:630px;top:333px;width:86px;height:65px;background:#80ff80"></div>
<div class="bar" style="left:630px;top:397px;width:86px;height:69px;background:#80ff80"></div>
<div class="bar" style="left:630px;top:465px;width:86px;height:68px;background:#ff6161"></div>
<div class="bar" style="left:630px;top:532px;width:86px;height:65px;background:#80ff80"></div>
<div class="bar" style="left:630px;top:596px;width:86px;height:69px;background:#80ff80"></div>
<div class="bar" style="left:630px;top:664px;width:86px;height:68px;background:#80ff80"></div>
<div class="bar" style="left:630px;top:731px;width:86px;height:70px;background:#80ff80"></div>
<div class="bar" style="left:630px;top:800px;width:86px;height:51px;background:#ff6161"></div>
<div class="lbl" style="left:628.5px;top:236.3px;width:86px">Me</div>
<div class="lbl" style="left:628.5px;top:275.6px;width:86px">Mo<br>3</div>
<div class="lbl" style="left:628.5px;top:341.0px;width:86px">As<br>5</div>
<div class="lbl" style="left:628.5px;top:407.0px;width:86px">Sa<br>5</div>
<div class="lbl" style="left:628.5px;top:474.6px;width:86px">Ju<br>5</div>
<div class="lbl" style="left:628.5px;top:540.0px;width:86px">Ma<br>5</div>
<div class="lbl" style="left:628.5px;top:605.9px;width:86px">Su<br>5</div>
<div class="lbl" style="left:628.5px;top:673.3px;width:86px">Ve<br>5</div>
<div class="lbl" style="left:628.5px;top:741.5px;width:86px">Me<br>5</div>
<div class="lbl" style="left:628.5px;top:812.9px;width:86px">Mo</div>
<div class="bar" style="left:743px;top:230px;width:86px;height:621px;background:#80ff80"></div>
<div class="lbl" style="left:741.5px;top:516.1px;width:86px">Su<br>4</div>
<div class="a ser" style="left:537px;top:221px;font-size:22.6px;line-height:24px;color:#f00">R</div>
<div class="a" style="left:550px;top:245px;width:2px;height:606px;background:#f00"></div>
<div class="a ser" style="left:763px;top:221px;font-size:22.6px;line-height:24px;color:#f00">R</div>
<div class="a" style="left:776px;top:245px;width:2px;height:606px;background:#f00"></div>
<div class="a ser" style="left:311px;top:756px;font-size:22.6px;line-height:24px;color:#f00">R</div>
<div class="a" style="left:324px;top:780px;width:2px;height:71px;background:#f00"></div>
<div class="hist" style="top:232px;width:74px"></div>
<div class="hist" style="top:235px;width:74px"></div>
<div class="hist" style="top:237px;width:99px"></div>
<div class="hist" style="top:240px;width:99px"></div>
<div class="hist" style="top:242px;width:123px"></div>
<div class="hist" style="top:245px;width:123px"></div>
<div class="hist" style="top:248px;width:123px"></div>
<div class="hist" style="top:250px;width:123px"></div>
<div class="hist" style="top:253px;width:123px"></div>
<div class="hist" style="top:255px;width:123px"></div>
<div class="hist" style="top:258px;width:123px"></div>
<div class="hist" style="top:261px;width:123px"></div>
<div class="hist" style="top:263px;width:123px"></div>
<div class="hist" style="top:266px;width:123px"></div>
<div class="hist" style="top:268px;width:123px"></div>
<div class="hist" style="top:271px;width:123px"></div>
<div class="hist" style="top:273px;width:148px"></div>
<div class="hist" style="top:276px;width:148px"></div>
<div class="hist" style="top:279px;width:148px"></div>
<div class="hist" style="top:281px;width:148px"></div>
<div class="hist" style="top:284px;width:148px"></div>
<div class="hist" style="top:286px;width:123px"></div>
<div class="hist" style="top:289px;width:148px"></div>
<div class="hist" style="top:292px;width:148px"></div>
<div class="hist" style="top:294px;width:173px"></div>
<div class="hist" style="top:297px;width:173px"></div>
<div class="hist" style="top:299px;width:173px"></div>
<div class="hist" style="top:302px;width:173px"></div>
<div class="hist" style="top:304px;width:173px"></div>
<div class="hist" style="top:307px;width:148px"></div>
<div class="hist" style="top:310px;width:148px"></div>
<div class="hist" style="top:312px;width:148px"></div>
<div class="hist" style="top:315px;width:148px"></div>
<div class="hist" style="top:317px;width:148px"></div>
<div class="hist" style="top:320px;width:148px"></div>
<div class="hist" style="top:323px;width:148px"></div>
<div class="hist" style="top:325px;width:148px"></div>
<div class="hist" style="top:328px;width:173px"></div>
<div class="hist" style="top:330px;width:173px"></div>
<div class="hist" style="top:333px;width:173px"></div>
<div class="hist" style="top:335px;width:173px"></div>
<div class="hist" style="top:338px;width:173px"></div>
<div class="hist" style="top:341px;width:173px"></div>
<div class="hist" style="top:343px;width:173px"></div>
<div class="hist" style="top:346px;width:148px"></div>
<div class="hist" style="top:348px;width:148px"></div>
<div class="hist" style="top:351px;width:148px"></div>
<div class="hist" style="top:354px;width:148px"></div>
<div class="hist" style="top:356px;width:148px"></div>
<div class="hist" style="top:359px;width:148px"></div>
<div class="hist" style="top:361px;width:148px"></div>
<div class="hist" style="top:364px;width:148px"></div>
<div class="hist" style="top:366px;width:148px"></div>
<div class="hist" style="top:369px;width:148px"></div>
<div class="hist" style="top:372px;width:148px"></div>
<div class="hist" style="top:374px;width:148px"></div>
<div class="hist" style="top:377px;width:123px"></div>
<div class="hist" style="top:379px;width:123px"></div>
<div class="hist" style="top:382px;width:123px"></div>
<div class="hist" style="top:385px;width:123px"></div>
<div class="hist" style="top:387px;width:123px"></div>
<div class="hist" style="top:390px;width:148px"></div>
<div class="hist" style="top:392px;width:148px"></div>
<div class="hist" style="top:395px;width:148px"></div>
<div class="hist" style="top:397px;width:148px"></div>
<div class="hist" style="top:400px;width:148px"></div>
<div class="hist" style="top:403px;width:148px"></div>
<div class="hist" style="top:405px;width:148px"></div>
<div class="hist" style="top:408px;width:148px"></div>
<div class="hist" style="top:410px;width:148px"></div>
<div class="hist" style="top:413px;width:123px"></div>
<div class="hist" style="top:416px;width:123px"></div>
<div class="hist" style="top:418px;width:123px"></div>
<div class="hist" style="top:421px;width:123px"></div>
<div class="hist" style="top:423px;width:148px"></div>
<div class="hist" style="top:426px;width:148px"></div>
<div class="hist" style="top:428px;width:148px"></div>
<div class="hist" style="top:431px;width:123px"></div>
<div class="hist" style="top:434px;width:123px"></div>
<div class="hist" style="top:436px;width:148px"></div>
<div class="hist" style="top:439px;width:148px"></div>
<div class="hist" style="top:441px;width:123px"></div>
<div class="hist" style="top:444px;width:123px"></div>
<div class="hist" style="top:447px;width:148px"></div>
<div class="hist" style="top:449px;width:148px"></div>
<div class="hist" style="top:452px;width:173px"></div>
<div class="hist" style="top:454px;width:173px"></div>
<div class="hist" style="top:457px;width:173px"></div>
<div class="hist" style="top:459px;width:173px"></div>
<div class="hist" style="top:462px;width:148px"></div>
<div class="hist" style="top:465px;width:148px"></div>
<div class="hist" style="top:467px;width:148px"></div>
<div class="hist" style="top:470px;width:148px"></div>
<div class="hist" style="top:472px;width:148px"></div>
<div class="hist" style="top:475px;width:148px"></div>
<div class="hist" style="top:478px;width:148px"></div>
<div class="hist" style="top:480px;width:123px"></div>
<div class="hist" style="top:483px;width:123px"></div>
<div class="hist" style="top:485px;width:148px"></div>
<div class="hist" style="top:488px;width:148px"></div>
<div class="hist" style="top:490px;width:123px"></div>
<div class="hist" style="top:493px;width:123px"></div>
<div class="hist" style="top:496px;width:123px"></div>
<div class="hist" style="top:498px;width:123px"></div>
<div class="hist" style="top:501px;width:123px"></div>
<div class="hist" style="top:503px;width:123px"></div>
<div class="hist" style="top:506px;width:123px"></div>
<div class="hist" style="top:509px;width:123px"></div>
<div class="hist" style="top:511px;width:148px"></div>
<div class="hist" style="top:514px;width:148px"></div>
<div class="hist" style="top:516px;width:148px"></div>
<div class="hist" style="top:519px;width:148px"></div>
<div class="hist" style="top:521px;width:148px"></div>
<div class="hist" style="top:524px;width:148px"></div>
<div class="hist" style="top:527px;width:148px"></div>
<div class="hist" style="top:529px;width:148px"></div>
<div class="hist" style="top:532px;width:148px"></div>
<div class="hist" style="top:534px;width:173px"></div>
<div class="hist" style="top:537px;width:123px"></div>
<div class="hist" style="top:540px;width:123px"></div>
<div class="hist" style="top:542px;width:123px"></div>
<div class="hist" style="top:545px;width:123px"></div>
<div class="hist" style="top:547px;width:148px"></div>
<div class="hist" style="top:550px;width:148px"></div>
<div class="hist" style="top:552px;width:148px"></div>
<div class="hist" style="top:555px;width:148px"></div>
<div class="hist" style="top:558px;width:148px"></div>
<div class="hist" style="top:560px;width:148px"></div>
<div class="hist" style="top:563px;width:148px"></div>
<div class="hist" style="top:565px;width:148px"></div>
<div class="hist" style="top:568px;width:148px"></div>
<div class="hist" style="top:571px;width:148px"></div>
<div class="hist" style="top:573px;width:148px"></div>
<div class="hist" style="top:576px;width:148px"></div>
<div class="hist" style="top:578px;width:148px"></div>
<div class="hist" style="top:581px;width:148px"></div>
<div class="hist" style="top:583px;width:148px"></div>
<div class="hist" style="top:586px;width:148px"></div>
<div class="hist" style="top:589px;width:123px"></div>
<div class="hist" style="top:591px;width:123px"></div>
<div class="hist" style="top:594px;width:123px"></div>
<div class="hist" style="top:596px;width:123px"></div>
<div class="hist" style="top:599px;width:123px"></div>
<div class="hist" style="top:602px;width:123px"></div>
<div class="hist" style="top:604px;width:123px"></div>
<div class="hist" style="top:607px;width:123px"></div>
<div class="hist" style="top:609px;width:123px"></div>
<div class="hist" style="top:612px;width:123px"></div>
<div class="hist" style="top:614px;width:123px"></div>
<div class="hist" style="top:617px;width:123px"></div>
<div class="hist" style="top:620px;width:123px"></div>
<div class="hist" style="top:622px;width:148px"></div>
<div class="hist" style="top:625px;width:148px"></div>
<div class="hist" style="top:627px;width:123px"></div>
<div class="hist" style="top:630px;width:123px"></div>
<div class="hist" style="top:633px;width:148px"></div>
<div class="hist" style="top:635px;width:148px"></div>
<div class="hist" style="top:638px;width:123px"></div>
<div class="hist" style="top:640px;width:123px"></div>
<div class="hist" style="top:643px;width:123px"></div>
<div class="hist" style="top:645px;width:123px"></div>
<div class="hist" style="top:648px;width:123px"></div>
<div class="hist" style="top:651px;width:123px"></div>
<div class="hist" style="top:653px;width:123px"></div>
<div class="hist" style="top:656px;width:99px"></div>
<div class="hist" style="top:658px;width:99px"></div>
<div class="hist" style="top:661px;width:123px"></div>
<div class="hist" style="top:664px;width:123px"></div>
<div class="hist" style="top:666px;width:99px"></div>
<div class="hist" style="top:669px;width:99px"></div>
<div class="hist" style="top:671px;width:99px"></div>
<div class="hist" style="top:674px;width:99px"></div>
<div class="hist" style="top:676px;width:99px"></div>
<div class="hist" style="top:679px;width:123px"></div>
<div class="hist" style="top:682px;width:123px"></div>
<div class="hist" style="top:684px;width:123px"></div>
<div class="hist" style="top:687px;width:99px"></div>
<div class="hist" style="top:689px;width:99px"></div>
<div class="hist" style="top:692px;width:99px"></div>
<div class="hist" style="top:695px;width:123px"></div>
<div class="hist" style="top:697px;width:99px"></div>
<div class="hist" style="top:700px;width:99px"></div>
<div class="hist" style="top:702px;width:99px"></div>
<div class="hist" style="top:705px;width:99px"></div>
<div class="hist" style="top:707px;width:99px"></div>
<div class="hist" style="top:710px;width:99px"></div>
<div class="hist" style="top:713px;width:99px"></div>
<div class="hist" style="top:715px;width:123px"></div>
<div class="hist" style="top:718px;width:123px"></div>
<div class="hist" style="top:720px;width:123px"></div>
<div class="hist" style="top:723px;width:99px"></div>
<div class="hist" style="top:726px;width:99px"></div>
<div class="hist" style="top:728px;width:99px"></div>
<div class="hist" style="top:731px;width:99px"></div>
<div class="hist" style="top:733px;width:99px"></div>
<div class="hist" style="top:736px;width:99px"></div>
<div class="hist" style="top:738px;width:99px"></div>
<div class="hist" style="top:741px;width:123px"></div>
<div class="hist" style="top:744px;width:123px"></div>
<div class="hist" style="top:746px;width:123px"></div>
<div class="hist" style="top:749px;width:123px"></div>
<div class="hist" style="top:751px;width:123px"></div>
<div class="hist" style="top:754px;width:123px"></div>
<div class="hist" style="top:757px;width:123px"></div>
<div class="hist" style="top:759px;width:123px"></div>
<div class="hist" style="top:762px;width:123px"></div>
<div class="hist" style="top:764px;width:123px"></div>
<div class="hist" style="top:767px;width:99px"></div>
<div class="hist" style="top:769px;width:99px"></div>
<div class="hist" style="top:772px;width:123px"></div>
<div class="hist" style="top:775px;width:123px"></div>
<div class="hist" style="top:777px;width:123px"></div>
<div class="hist" style="top:780px;width:99px"></div>
<div class="hist" style="top:782px;width:99px"></div>
<div class="hist" style="top:785px;width:99px"></div>
<div class="hist" style="top:788px;width:99px"></div>
<div class="hist" style="top:790px;width:99px"></div>
<div class="hist" style="top:793px;width:99px"></div>
<div class="hist" style="top:795px;width:99px"></div>
<div class="hist" style="top:798px;width:99px"></div>
<div class="hist" style="top:800px;width:99px"></div>
<div class="hist" style="top:803px;width:74px"></div>
<div class="hist" style="top:806px;width:99px"></div>
<div class="hist" style="top:808px;width:99px"></div>
<div class="hist" style="top:811px;width:99px"></div>
<div class="hist" style="top:813px;width:99px"></div>
<div class="hist" style="top:816px;width:99px"></div>
<div class="hist" style="top:819px;width:99px"></div>
<div class="hist" style="top:821px;width:99px"></div>
<div class="hist" style="top:824px;width:99px"></div>
<div class="hist" style="top:826px;width:99px"></div>
<div class="hist" style="top:829px;width:99px"></div>
<div class="hist" style="top:831px;width:74px"></div>
<div class="hist" style="top:834px;width:74px"></div>
<div class="hist" style="top:837px;width:99px"></div>
<div class="hist" style="top:839px;width:99px"></div>
<div class="hist" style="top:842px;width:99px"></div>
<div class="hist" style="top:844px;width:123px"></div>
<div class="hist" style="top:847px;width:123px"></div>
<div class="hist" style="top:850px;width:123px"></div>
<div class="a panel" style="left:1075px;top:183px;width:515px;height:668px"></div>
<div class="a tbox" style="left:1075px;top:145px;width:515px;height:39px"></div>
<div class="a ser" style="left:1087px;top:147px;font-size:31.4px;line-height:34px">Gochara (Transits) Dasha timeline</div>
<div class="a ser" style="left:1075px;top:185px;font-size:21.9px;line-height:24px">Jun 2018</div>
<div class="a" style="left:1075px;top:209px;width:29px;height:642px;background:#ffffe0;border:1px solid #222;border-bottom:none"></div>
<div class="hl" style="left:1075px;top:230px;width:29px"></div>
<div class="hl" style="left:1075px;top:250px;width:29px"></div>
<div class="hl" style="left:1075px;top:271px;width:29px"></div>
<div class="hl" style="left:1075px;top:292px;width:29px"></div>
<div class="hl" style="left:1075px;top:312px;width:29px"></div>
<div class="hl" style="left:1075px;top:333px;width:29px"></div>
<div class="hl" style="left:1075px;top:354px;width:29px"></div>
<div class="hl" style="left:1075px;top:374px;width:29px"></div>
<div class="hl" style="left:1075px;top:395px;width:29px"></div>
<div class="hl" style="left:1075px;top:416px;width:29px"></div>
<div class="hl" style="left:1075px;top:436px;width:29px"></div>
<div class="hl" style="left:1075px;top:457px;width:29px"></div>
<div class="hl" style="left:1075px;top:478px;width:29px"></div>
<div class="hl" style="left:1075px;top:498px;width:29px"></div>
<div class="hl" style="left:1075px;top:519px;width:29px"></div>
<div class="hl" style="left:1075px;top:540px;width:29px"></div>
<div class="hl" style="left:1075px;top:560px;width:29px"></div>
<div class="hl" style="left:1075px;top:581px;width:29px"></div>
<div class="hl" style="left:1075px;top:602px;width:29px"></div>
<div class="hl" style="left:1075px;top:622px;width:29px"></div>
<div class="hl" style="left:1075px;top:643px;width:29px"></div>
<div class="hl" style="left:1075px;top:664px;width:29px"></div>
<div class="hl" style="left:1075px;top:684px;width:29px"></div>
<div class="hl" style="left:1075px;top:705px;width:29px"></div>
<div class="hl" style="left:1075px;top:726px;width:29px"></div>
<div class="hl" style="left:1075px;top:746px;width:29px"></div>
<div class="hl" style="left:1075px;top:767px;width:29px"></div>
<div class="hl" style="left:1075px;top:788px;width:29px"></div>
<div class="hl" style="left:1075px;top:808px;width:29px"></div>
<div class="hl" style="left:1075px;top:829px;width:29px"></div>
<div class="num" style="left:1076px;top:231px;width:27px">1</div>
<div class="num" style="left:1076px;top:251px;width:27px">2</div>
<div class="num" style="left:1076px;top:272px;width:27px">3</div>
<div class="num" style="left:1076px;top:293px;width:27px">4</div>
<div class="num" style="left:1076px;top:313px;width:27px">5</div>
<div class="num" style="left:1076px;top:334px;width:27px">6</div>
<div class="num" style="left:1076px;top:355px;width:27px">7</div>
<div class="num" style="left:1076px;top:375px;width:27px">8</div>
<div class="num" style="left:1076px;top:396px;width:27px">9</div>
<div class="num" style="left:1076px;top:417px;width:27px">10</div>
<div class="num" style="left:1076px;top:437px;width:27px">11</div>
<div class="num" style="left:1076px;top:458px;width:27px">12</div>
<div class="num" style="left:1076px;top:479px;width:27px">13</div>
<div class="num" style="left:1076px;top:499px;width:27px">14</div>
<div class="num" style="left:1076px;top:520px;width:27px">15</div>
<div class="num" style="left:1076px;top:541px;width:27px">16</div>
<div class="num" style="left:1076px;top:561px;width:27px">17</div>
<div class="num" style="left:1076px;top:582px;width:27px">18</div>
<div class="num" style="left:1076px;top:603px;width:27px">19</div>
<div class="num" style="left:1076px;top:623px;width:27px">20</div>
<div class="num" style="left:1076px;top:644px;width:27px">21</div>
<div class="num" style="left:1076px;top:665px;width:27px">22</div>
<div class="num" style="left:1076px;top:685px;width:27px">23</div>
<div class="num" style="left:1076px;top:706px;width:27px">24</div>
<div class="num" style="left:1076px;top:727px;width:27px">25</div>
<div class="num" style="left:1076px;top:747px;width:27px">26</div>
<div class="num" style="left:1076px;top:768px;width:27px">27</div>
<div class="num" style="left:1076px;top:789px;width:27px">28</div>
<div class="num" style="left:1076px;top:809px;width:27px">29</div>
<div class="num" style="left:1076px;top:830px;width:27px">30</div>
<div class="hl" style="left:1115px;top:287px;width:475px"></div>
<div class="hl" style="left:1115px;top:693px;width:475px"></div>
<div class="hl" style="left:1115px;top:720px;width:475px"></div>
<div class="hl" style="left:1115px;top:797px;width:475px"></div>
<div class="hl" style="left:1115px;top:820px;width:475px"></div>
<div class="a ser" style="left:1115px;top:293px;font-size:21px;line-height:24px;white-space:nowrap"><span style="color:#4a3f78">Ra-</span><span style="color:#008000">Me-</span><span style="color:#0000ff">Sa-</span><span style="color:#ff8000">Ju</span></div>
<div class="a ser" style="left:1115px;top:699px;font-size:21px;line-height:24px;white-space:nowrap"><span style="color:#4a3f78">Ra-</span><span style="color:#6b1a1a">Ke-Ke-</span><span style="color:#6b1a1a">Ke</span></div>
<div class="a ser" style="left:1115px;top:725px;font-size:21px;line-height:24px;white-space:nowrap"><span style="color:#4a3f78">Ra-</span><span style="color:#6b1a1a">Ke-Ke-</span><span style="color:#ff00ff">Ve</span></div>
<div class="a ser" style="left:1115px;top:801px;font-size:21px;line-height:24px;white-space:nowrap"><span style="color:#4a3f78">Ra-</span><span style="color:#6b1a1a">Ke-Ke-</span><span style="color:#d00000">Su</span></div>
<div class="a ser" style="left:1115px;top:826px;font-size:21px;line-height:24px;white-space:nowrap"><span style="color:#4a3f78">Ra-</span><span style="color:#6b1a1a">Ke-Ke-</span><span style="color:#000">Mo</span></div>
<div class="a" style="left:9px;top:842px;width:1048px;height:1px;background:#f00"></div>
<div class="a" style="left:1075px;top:842px;width:515px;height:1px;background:#f00"></div>
<div class="a taskbar"></div>
<div class="a" style="left:48px;top:860px;width:344px;height:3px;background:#ececec;border-top:1px solid #c4c4c4"></div>
<div class="a" style="left:1595px;top:860px;width:1px;height:3px;background:#9a9a9a"></div>
</body></html>
